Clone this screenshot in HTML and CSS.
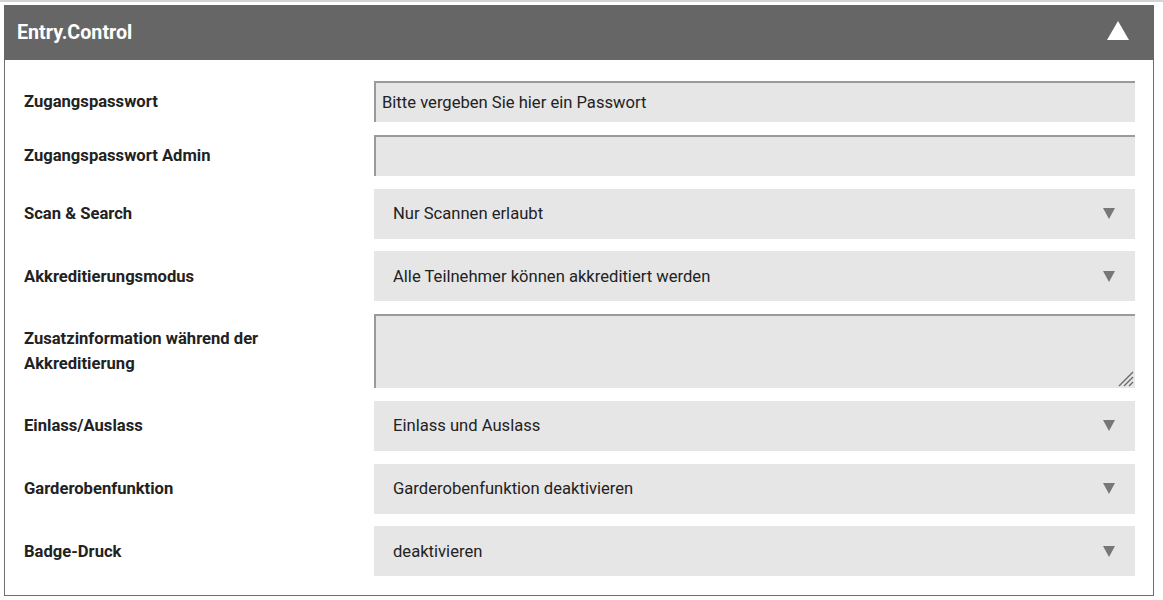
FILE: index.html
```html
<!DOCTYPE html>
<html lang="de">
<head>
<meta charset="utf-8">
<title>Entry.Control</title>
<link rel="stylesheet" href="styles.css">
</head>
<body>
<div class="topline"></div>
<section class="panel">
  <header class="panel-head">
    <h2 class="panel-title">Entry.Control</h2>
    <svg class="collapse" width="22" height="19" viewBox="0 0 22 19"><polygon points="11,0 22,19 0,19" fill="#fff"/></svg>
  </header>
  <div class="panel-body">
    <label class="lbl">Zugangspasswort</label>
    <div class="input">Bitte vergeben Sie hier ein Passwort</div>

    <label class="lbl">Zugangspasswort Admin</label>
    <div class="input"></div>

    <label class="lbl">Scan &amp; Search</label>
    <div class="select"><span>Nur Scannen erlaubt</span><svg class="caret" width="12" height="11" viewBox="0 0 12 11"><polygon points="0,0 12,0 6,11" fill="#777"/></svg></div>

    <label class="lbl">Akkreditierungsmodus</label>
    <div class="select"><span>Alle Teilnehmer können akkreditiert werden</span><svg class="caret" width="12" height="11" viewBox="0 0 12 11"><polygon points="0,0 12,0 6,11" fill="#777"/></svg></div>

    <label class="lbl">Zusatzinformation während der<br>Akkreditierung</label>
    <div class="textarea">
      <svg class="grip" width="17" height="17" viewBox="0 0 17 17"><path d="M16 2 L2 16 M16 7 L7 16 M16 12 L12 16" stroke="#6a6a6a" stroke-width="1.4" fill="none"/></svg>
    </div>

    <label class="lbl">Einlass/Auslass</label>
    <div class="select"><span>Einlass und Auslass</span><svg class="caret" width="12" height="11" viewBox="0 0 12 11"><polygon points="0,0 12,0 6,11" fill="#777"/></svg></div>

    <label class="lbl">Garderobenfunktion</label>
    <div class="select"><span>Garderobenfunktion deaktivieren</span><svg class="caret" width="12" height="11" viewBox="0 0 12 11"><polygon points="0,0 12,0 6,11" fill="#777"/></svg></div>

    <label class="lbl">Badge-Druck</label>
    <div class="select"><span>deaktivieren</span><svg class="caret" width="12" height="11" viewBox="0 0 12 11"><polygon points="0,0 12,0 6,11" fill="#777"/></svg></div>
  </div>
</section>
</body>
</html>
```
FILE: styles.css
```css
* { box-sizing: border-box; }
html, body { margin: 0; padding: 0; background: #fff; }
body {
  font-family: Roboto, "Liberation Sans", Arial, sans-serif;
  color: #222;
  width: 1163px;
}
.topline {
  height: 2px;
  background: #d4d4d4;
  margin-bottom: 3px;
}
.panel {
  margin-left: 4px;
  width: 1150px;
  border: 1px solid #6e6e6e;
  border-top: none;
}
.panel-head {
  height: 55px;
  background: #666;
  margin: 0 -1px;
  display: flex;
  align-items: center;
  justify-content: space-between;
  padding: 0 25px 0 13px;
}
.panel-title {
  margin: 0;
  color: #fff;
  font-size: 19.7px;
  font-weight: 700;
  letter-spacing: 0;
}
.collapse { display: block; margin-top: -4px; }
.panel-body {
  display: grid;
  grid-template-columns: 350px 761px;
  row-gap: 12.75px;
  padding: 21px 18px 19px 19px;
}
.lbl {
  font-size: 16.6px;
  font-weight: 700;
  line-height: 25px;
  align-self: center;
  color: #222;
}
.input {
  height: 41px;
  background: #e6e6e6;
  border-top: 2px solid #9a9a9a;
  border-left: 2px solid #9a9a9a;
  padding: 0 6px;
  font-size: 16.6px;
  display: flex;
  align-items: center;
}
.select {
  height: 50px;
  background: #e6e6e6;
  padding: 0 19px;
  font-size: 16.6px;
  display: flex;
  align-items: center;
  justify-content: space-between;
}
.caret { display: block; margin-right: 1px; }
.textarea {
  position: relative;
  height: 74px;
  background: #e6e6e6;
  border-top: 2px solid #9a9a9a;
  border-left: 2px solid #9a9a9a;
}
.grip {
  position: absolute;
  right: 1px;
  bottom: 1px;
}
```
